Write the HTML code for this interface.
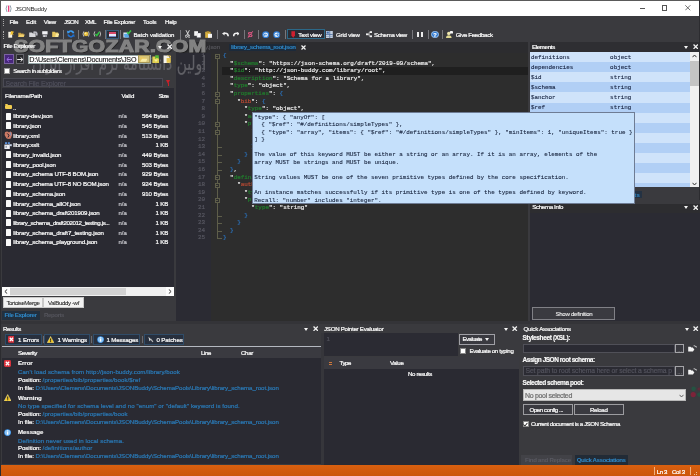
<!DOCTYPE html>
<html><head><meta charset="utf-8"><title>JSONBuddy</title>
<style>
*{box-sizing:border-box;margin:0;padding:0}
html,body{width:700px;height:476px;overflow:hidden}
body{position:relative;background:#3a3a3e;font:6px "Liberation Sans",sans-serif;color:#fafafa;line-height:1;-webkit-text-stroke:0.22px}
.a{position:absolute;white-space:nowrap}
.t{transform:translateY(-50%)}
.b{font-weight:bold;-webkit-text-stroke:0.08px}
.m{font-family:"Liberation Mono",monospace;font-size:5.9px}
.blue{color:#2f86c4}
.dim{color:#64646c}
.k{color:#217c2d}.s{color:#e8e8e8}.p{color:#d8d8d8}.br{color:#2b70b8}.r{color:#b84a34}
.sep{position:absolute;width:1px;height:9px;top:30px;background:#77777c}
.tt{color:#14203a;-webkit-text-stroke:0.08px}
.el{color:#14203e;-webkit-text-stroke:0.1px}
</style></head><body><div id="root" style="position:absolute;left:0;top:0;width:700px;height:476px;overflow:hidden;will-change:transform">
<div class="a" style="left:0px;top:0px;width:700px;height:16px;background:#fff;border-top:1px solid #5a5a5a;border-left:1px solid #555"></div>
<svg class="a" style="left:5.4px;top:5px" width="7.2" height="7.4" viewBox="0 0 7.2 7.4"><path d="M2 0.4Q0.2 3.7 2 7M5.2 0.4Q7 3.7 5.2 7" stroke="#8a9aa8" stroke-width="0.9" fill="none"/><rect x="3" y="0.6" width="1.3" height="6.2" fill="#e8407c"/></svg>
<div class="a t " style="left:15px;top:8.7px;font-size:6.2px;letter-spacing:-0.257px;color:#2a2a2a;-webkit-text-stroke:0">JSONBuddy</div>
<div class="a" style="left:640px;top:8px;width:4.8px;height:0.8px;background:#555;"></div>
<div class="a" style="left:662px;top:5.4px;width:5.4px;height:5.4px;background:transparent;border:0.8px solid #555"></div>
<svg class="a" style="left:685.4px;top:5.2px" width="5.6" height="5.6" viewBox="0 0 5.6 5.6"><path d="M0.3 0.3L5.3 5.3M5.3 0.3L0.3 5.3" stroke="#444" stroke-width="0.75"/></svg>
<div class="a" style="left:698.7px;top:0px;width:1.3px;height:200px;background:#2c2c30;z-index:12"></div>
<div class="a" style="left:0px;top:16px;width:1.2px;height:460px;background:#2c2c30;z-index:12"></div>
<div class="a" style="left:3.1px;top:19.2px;width:1px;height:1px;background:#aaa;"></div>
<div class="a" style="left:3.1px;top:21.0px;width:1px;height:1px;background:#aaa;"></div>
<div class="a" style="left:3.1px;top:22.8px;width:1px;height:1px;background:#aaa;"></div>
<div class="a" style="left:3.1px;top:24.6px;width:1px;height:1px;background:#aaa;"></div>
<div class="a t " style="left:9.4px;top:22.1px;font-size:6.1px;letter-spacing:-0.307px;">File</div>
<div class="a t " style="left:26px;top:22.1px;font-size:6.1px;letter-spacing:-0.128px;">Edit</div>
<div class="a t " style="left:43.7px;top:22.1px;font-size:6.1px;letter-spacing:-0.203px;">View</div>
<div class="a t " style="left:64px;top:22.1px;font-size:6.1px;letter-spacing:-0.567px;">JSON</div>
<div class="a t " style="left:85px;top:22.1px;font-size:6.1px;letter-spacing:-0.514px;">XML</div>
<div class="a t " style="left:103.5px;top:22.1px;font-size:6.1px;letter-spacing:-0.210px;">File Explorer</div>
<div class="a t " style="left:143px;top:22.1px;font-size:6.1px;letter-spacing:-0.148px;">Tools</div>
<div class="a t " style="left:165px;top:22.1px;font-size:6.1px;letter-spacing:-0.261px;">Help</div>
<div class="a" style="left:3.1px;top:30.6px;width:1px;height:1px;background:#aaa;"></div>
<div class="a" style="left:3.1px;top:32.4px;width:1px;height:1px;background:#aaa;"></div>
<div class="a" style="left:3.1px;top:34.2px;width:1px;height:1px;background:#aaa;"></div>
<div class="a" style="left:3.1px;top:36.0px;width:1px;height:1px;background:#aaa;"></div>
<div class="a" style="left:3.1px;top:37.800000000000004px;width:1px;height:1px;background:#aaa;"></div>
<svg class="a" style="left:8.2px;top:30.6px" width="6.4" height="7" viewBox="0 0 6.4 7"><path d="M0.3 0.8H4.2V6.7H0.3Z" fill="#f4f0e4"/><path d="M3 0L6.2 0.8L4.8 2.2L5.6 4L3.6 3.2L2.4 4.4L2.6 2.4Z" fill="#f0c030"/></svg>
<svg class="a" style="left:18.4px;top:32px" width="7" height="5.4" viewBox="0 0 7 5.4"><path d="M0.2 0.8H2.6L3.2 1.6H5.6V5.2H0.2Z" fill="#c8a040"/><path d="M1.4 2.6H6.8L5.6 5.2H0.2Z" fill="#f0d070"/></svg>
<svg class="a" style="left:29.4px;top:30.8px" width="8.8" height="6.6" viewBox="0 0 8.8 6.6"><path d="M0.2 1.4H3L3.6 2.2H6.6V6.4H0.2Z" fill="#d8d8dc"/><path d="M4.6 0.2L7.4 0.6L8.6 2V4.4H6.8V2H4.2Z" fill="#b8b8c0"/></svg>
<svg class="a" style="left:42.2px;top:30.8px" width="5.8" height="6.6" viewBox="0 0 5.8 6.6"><rect x="0.2" y="0.2" width="5.4" height="3.2" fill="#f0f0f4"/><rect x="0.8" y="3.8" width="4.2" height="2.6" fill="#a0a0a8"/><rect x="1.6" y="4.4" width="1.2" height="1.6" fill="#e0e0e0"/></svg>
<svg class="a" style="left:51.8px;top:31.2px" width="7.4" height="6.2" viewBox="0 0 7.4 6.2"><path d="M0.2 0.8H2.8L3.4 1.6H6.2V6H0.2Z" fill="#e8c860"/><path d="M4 2.6L7.2 2.6L6.2 6H3.2Z" fill="#f8e8a0"/></svg>
<div class="sep" style="left:63.3px"></div>
<svg class="a" style="left:67.2px;top:30.4px" width="7.6" height="7.8" viewBox="0 0 7.6 7.8"><path d="M6.6 3.2A3 3 0 0 0 1.2 2.4" stroke="#3a9af0" stroke-width="1.7" fill="none"/><path d="M0 0.6L0.4 3.6L3 2.8Z" fill="#3a9af0"/><path d="M1 4.6A3 3 0 0 0 6.4 5.4" stroke="#2070d0" stroke-width="1.7" fill="none"/><path d="M7.6 7.2L7.2 4.2L4.6 5Z" fill="#2070d0"/></svg>
<div class="sep" style="left:78.2px"></div>
<svg class="a" style="left:81.6px;top:31.4px" width="8.2" height="6" viewBox="0 0 8.2 6"><path d="M1.8 0.4Q0.2 3 1.8 5.6M6.4 0.4Q8 3 6.4 5.6" stroke="#c8c8c8" stroke-width="0.9" fill="none"/><circle cx="4.1" cy="3" r="2.3" fill="#e8c040"/><circle cx="3.6" cy="2.4" r="0.9" fill="#fff0a0"/></svg>
<svg class="a" style="left:93.2px;top:31.4px" width="8.6" height="6" viewBox="0 0 8.6 6"><path d="M1.8 0.4Q0.2 3 1.8 5.6M6.8 0.4Q8.4 3 6.8 5.6" stroke="#c8c8c8" stroke-width="0.9" fill="none"/><path d="M2.4 3L3.8 4.6L6.4 1" stroke="#30c040" stroke-width="1.5" fill="none"/></svg>
<div class="sep" style="left:104.6px"></div>
<div class="a" style="left:106.2px;top:29.6px;width:12.8px;height:9.6px;background:#2b2d36;border:1px solid #385a78"></div>
<div class="a" style="left:109px;top:32px;width:7px;height:2.4px;background:#d84868;"></div>
<div class="a" style="left:109px;top:34.4px;width:7px;height:2.6px;background:#e4e8f8;"></div>
<div class="a" style="left:109px;top:36.2px;width:7px;height:0.8px;background:#7088c8;"></div>
<div class="sep" style="left:120.3px"></div>
<svg class="a" style="left:123.2px;top:30px" width="8.4" height="8" viewBox="0 0 8.4 8"><path d="M0.4 2.6L4.4 2.6L5.6 7.6H0.4Z" fill="#dce8f4"/><path d="M1 4L5 3.4L6.4 7.6H1.6Z" fill="#58a8e8"/><path d="M4 2L5.4 3.6L8 0.4" stroke="#38c048" stroke-width="1.5" fill="none"/></svg>
<div class="a t " style="left:133.4px;top:34.5px;font-size:6.1px;letter-spacing:-0.129px;">Batch validation</div>
<div class="sep" style="left:180.1px;height:10px"></div>
<svg class="a" style="left:184.8px;top:30.4px" width="5.4" height="8" viewBox="0 0 5.4 8"><path d="M1 0.2L3.6 5.2M4.4 0.2L1.8 5.2" stroke="#e4e4e4" stroke-width="0.9" fill="none"/><circle cx="1.3" cy="6.3" r="1.1" fill="none" stroke="#e4e4e4" stroke-width="0.8"/><circle cx="4.1" cy="6.3" r="1.1" fill="none" stroke="#e4e4e4" stroke-width="0.8"/></svg>
<svg class="a" style="left:194.4px;top:30.8px" width="7" height="6.8" viewBox="0 0 7 6.8"><rect x="0.2" y="0.2" width="3.8" height="4.6" fill="#f4f4f4"/><rect x="2.8" y="2" width="4" height="4.6" fill="#d4d4dc"/><rect x="3.4" y="2.6" width="2.8" height="3.4" fill="#f8f8f8"/></svg>
<svg class="a" style="left:205px;top:30.6px" width="7.4" height="7" viewBox="0 0 7.4 7"><rect x="0.2" y="0.8" width="5.4" height="6" fill="#d8b040"/><rect x="1.6" y="0" width="2.6" height="1.6" fill="#a08030"/><rect x="3" y="2.8" width="4.2" height="4" fill="#f4f4f4"/></svg>
<div class="sep" style="left:217.3px"></div>
<svg class="a" style="left:221.8px;top:32.4px" width="6.8" height="4.4" viewBox="0 0 6.8 4.4"><path d="M6.2 4.2Q6.2 1.2 3.4 1.2H1.8" stroke="#f0f0f0" stroke-width="1.6" fill="none"/><path d="M0 1.6L2.6 0V3.4Z" fill="#f0f0f0"/></svg>
<svg class="a" style="left:232.6px;top:32.4px" width="6.8" height="4.4" viewBox="0 0 6.8 4.4"><path d="M0.6 4.2Q0.6 1.2 3.4 1.2H5" stroke="#f0f0f0" stroke-width="1.6" fill="none"/><path d="M6.8 1.6L4.2 0V3.4Z" fill="#f0f0f0"/></svg>
<div class="sep" style="left:243.7px"></div>
<div class="a t b" style="left:247.6px;top:34.6px;font-size:8px;color:#e05884;-webkit-text-stroke:0">S</div>
<svg class="a" style="left:247.2px;top:30.8px" width="6.8" height="7" viewBox="0 0 6.8 7"><path d="M5.8 0.2L1 6.8" stroke="#e05884" stroke-width="0.9"/></svg>
<div class="sep" style="left:258px"></div>
<svg class="a" style="left:262.3px;top:30.6px" width="7.4" height="7.4" viewBox="0 0 7.4 7.4"><circle cx="3.7" cy="3.7" r="3.5" fill="#2f7ed8"/><circle cx="3.7" cy="3.7" r="2.3" fill="#e8f2fc"/><path d="M5 3.7H2.2M3.4 2.4L2 3.7L3.4 5" stroke="#2f7ed8" stroke-width="0.8" fill="none"/></svg>
<svg class="a" style="left:273.3px;top:30.6px" width="7.4" height="7.4" viewBox="0 0 7.4 7.4"><circle cx="3.7" cy="3.7" r="3.5" fill="#2f7ed8"/><circle cx="3.7" cy="3.7" r="2.3" fill="#e8f2fc"/><path d="M2.4 3.7H5.2M4 2.4L5.4 3.7L4 5" stroke="#2f7ed8" stroke-width="0.8" fill="none"/></svg>
<div class="sep" style="left:284.5px"></div>
<div class="a" style="left:287px;top:28.6px;width:38.4px;height:10.6px;background:#2a2c34;border:1px solid #2c6888"></div>
<svg class="a" style="left:291px;top:31px" width="4.4" height="7" viewBox="0 0 4.4 7"><path d="M0.4 0.2H4V4.4L2.2 6.8L0.4 4.4Z" fill="#d02030"/></svg>
<div class="a t " style="left:298.3px;top:34.5px;font-size:6.1px;letter-spacing:-0.209px;">Text view</div>
<svg class="a" style="left:326.4px;top:30.6px" width="6.8" height="7.6" viewBox="0 0 6.8 7.6"><rect width="6.8" height="7.6" fill="#c4d0e0"/><rect x="0.6" y="0.6" width="2.2" height="2" fill="#3c68a8"/><rect x="3.4" y="0" width="0.8" height="7.6" fill="#5070a0"/><rect x="0" y="3.2" width="6.8" height="0.8" fill="#5070a0"/><rect x="0" y="5.4" width="6.8" height="0.6" fill="#8098b8"/></svg>
<div class="a t " style="left:336px;top:34.5px;font-size:6.1px;letter-spacing:-0.180px;">Grid view</div>
<svg class="a" style="left:365.6px;top:31.2px" width="6.6" height="6.4" viewBox="0 0 6.6 6.4"><rect x="0" y="2.4" width="2.6" height="1.8" fill="#f0f0f0"/><rect x="3.8" y="0.2" width="2.6" height="1.8" fill="#f0f0f0"/><rect x="3.8" y="4.4" width="2.6" height="1.8" fill="#f0f0f0"/><path d="M2.6 3.3H3.2M3.2 1.1V5.3M3.2 1.1H3.8M3.2 5.3H3.8" stroke="#f0f0f0" stroke-width="0.6" fill="none"/></svg>
<div class="a t " style="left:374px;top:34.5px;font-size:6.1px;letter-spacing:-0.307px;">Schema view</div>
<div class="sep" style="left:412px"></div>
<div class="a" style="left:416.6px;top:31.6px;width:2.4px;height:5.8px;background:#ececec;"></div>
<div class="a" style="left:421px;top:31.6px;width:2.4px;height:5.8px;background:#ececec;"></div>
<div class="sep" style="left:427.5px"></div>
<div class="a" style="left:431.4px;top:30.9px;width:7.2px;height:7.2px;border-radius:4px;background:#2f78d0;border:0.6px solid #9cc4f0;color:#fff;font-size:5.6px;font-weight:bold;text-align:center;line-height:6.2px">?</div>
<div class="sep" style="left:441.5px"></div>
<svg class="a" style="left:446.4px;top:30.6px" width="7" height="7.2" viewBox="0 0 7 7.2"><circle cx="2.8" cy="2.4" r="1.7" fill="#f0e8b0"/><path d="M0 7.2Q0 4.2 2.8 4.2Q5.6 4.2 5.6 7.2Z" fill="#e0d890"/><rect x="4" y="0" width="3" height="2.4" rx="0.5" fill="#f8f8f8"/></svg>
<div class="a t " style="left:455.7px;top:34.5px;font-size:6.1px;letter-spacing:-0.309px;">Give Feedback</div>
<div class="a" style="left:0px;top:42px;width:176px;height:280px;background:#3a3a3e;"></div>
<div class="a t  b" style="left:3.4px;top:46.1px;font-size:6.1px;letter-spacing:-0.412px;z-index:10">File Explorer</div>
<div class="a" style="z-index:10;left:158.0px;top:45.6px;width:0;height:0;border-left:2.5px solid transparent;border-right:2.5px solid transparent;border-top:3px solid #f4f4f4"></div>
<svg class="a" style="z-index:10;left:166.7px;top:44.0px" width="5.4" height="5.4" viewBox="0 0 10 10"><path d="M1 1L9 9M9 1L1 9" stroke="#f4f4f4" stroke-width="2.4"/></svg>
<div class="a" style="left:0;top:0;z-index:2">
<div class="a" style="left:4px;top:54.4px;width:9.8px;height:9.4px;background:#47267c;border:0.8px solid #7a62a0"></div>
<svg class="a" style="left:5.6px;top:56.6px" width="6.6" height="5" viewBox="0 0 6.6 5"><path d="M6.4 2.5H1M3 0.4L0.8 2.5L3 4.6" stroke="#9a6ae0" stroke-width="1" fill="none"/></svg>
<div class="a" style="left:15.9px;top:54.4px;width:8.6px;height:9.4px;background:#28282c;border:0.8px solid #66666c"></div>
<svg class="a" style="left:17px;top:56.6px" width="6.6" height="5" viewBox="0 0 6.6 5"><path d="M0.2 2.5H5.6M3.6 0.4L5.8 2.5L3.6 4.6" stroke="#f0f0f0" stroke-width="1" fill="none"/></svg>
<div class="a" style="left:28px;top:54.6px;width:122.5px;height:9.4px;background:#fff;border:0.8px solid #9aa"></div>
<div class="a t " style="left:29.3px;top:59.6px;font-size:7.2px;letter-spacing:-0.188px;color:#111;-webkit-text-stroke:0.1px">D:\Users\Clemens\Documents\JSO</div>
<div class="a" style="left:137.5px;top:55.4px;width:12px;height:7.8px;background:#d4c47c;border:0.8px solid #a89858"></div>
<svg class="a" style="left:140px;top:56.2px" width="7.4" height="6" viewBox="0 0 7.4 6"><path d="M0.2 0.8H2.8L3.4 1.6H6.2V5.8H0.2Z" fill="#e8c860"/><path d="M2 2.8L7.2 2.8L6.2 5.8H0.2Z" fill="#f8eca8"/></svg>
<svg class="a" style="left:152.4px;top:55.2px" width="8" height="8.2" viewBox="0 0 8 8.2"><path d="M0.4 1.6H3.2L4 2.6H7V8H0.4Z" fill="#e0d050"/><path d="M3.2 0.2H6.8V4L5 2.8L3.2 4Z" fill="#58b838"/><path d="M2 4.4L6 4.4L4 7Z" fill="#f4f0a0"/></svg>
<svg class="a" style="left:163.2px;top:55.2px" width="8" height="8.2" viewBox="0 0 8 8.2"><path d="M0.6 0.4H5L6.6 2V8H0.6Z" fill="#f4f4ec"/><path d="M3.6 3H7.8V7.8H3.6Z" fill="#e8c850"/><path d="M4.2 1L7.6 1L7.6 2.8" fill="none" stroke="#f0d060" stroke-width="0.9"/></svg>
<div class="a" style="left:4px;top:68px;width:6.2px;height:6px;background:#fff;border:0.5px solid #999"></div>
<div class="a t " style="left:13.2px;top:71.3px;font-size:6.2px;letter-spacing:-0.411px;">Search in subfolders</div>
</div>
<div class="a" style="left:3px;top:78.2px;width:159.5px;height:9px;background:#32323b;border:0.8px solid #4a4a54"></div>
<div class="a t " style="left:5.6px;top:83px;font-size:7px;letter-spacing:-0.166px;color:#4e4e5a">Search File Explorer</div>
<div class="a" style="left:165.5px;top:80px;width:0;height:0;border-left:2.7px solid transparent;border-right:2.7px solid transparent;border-top:4px solid #c8202a"></div>
<div class="a" style="left:167.5px;top:83px;width:1.4px;height:3.2px;background:#c8202a;"></div>
<div class="a" style="left:2px;top:87.8px;width:171.5px;height:199.5px;background:#2a2a32;"></div>
<div class="a t " style="left:5px;top:95.7px;font-size:6.1px;letter-spacing:-0.179px;">Filename/Path</div>
<div class="a t " style="left:121.4px;top:95.7px;font-size:6.1px;letter-spacing:-0.042px;">Valid</div>
<div class="a t " style="left:158.6px;top:95.7px;font-size:6.1px;letter-spacing:-0.542px;">Size</div>
<div class="a" style="left:4.6px;top:104.7px;width:7.2px;height:4.6px;background:#f0cc50;border-radius:1px"></div>
<div class="a" style="left:4.6px;top:103.7px;width:3.2px;height:1.6px;background:#f0cc50;border-radius:1px 1px 0 0"></div>
<div class="a t " style="left:13px;top:107.5px;font-size:6.12px;letter-spacing:-0.067px;">..</div>
<div class="a" style="left:5.6px;top:112.60000000000001px;width:5.2px;height:7px;background:#fafafa;border-radius:0.5px"></div>
<div class="a t " style="left:13.3px;top:116.2px;font-size:6.12px;letter-spacing:-0.113px;">library-dev.json</div>
<div class="a t" style="left:118.5px;top:116.2px;color:#c4c4ca">n/a</div>
<div class="a t " style="left:142.05145625px;top:116.2px;font-size:6.12px;letter-spacing:-0.119px;">564 Bytes</div>
<div class="a" style="left:5.6px;top:122.30000000000001px;width:5.2px;height:7px;background:#fafafa;border-radius:0.5px"></div>
<div class="a t " style="left:13.3px;top:125.9px;font-size:6.12px;letter-spacing:-0.107px;">library.json</div>
<div class="a t" style="left:118.5px;top:125.9px;color:#c4c4ca">n/a</div>
<div class="a t " style="left:142.05145625px;top:125.9px;font-size:6.12px;letter-spacing:-0.119px;">545 Bytes</div>
<svg class="a" style="left:3.8px;top:131.4px" width="9" height="8.4" viewBox="0 0 9 8.4"><path d="M1 1.2Q3.4 -0.4 5 1.6L6.2 0.6Q8.4 1 8.2 3.6L6.8 7.6Q4.4 8.6 2.4 7.2L0.6 4Z" fill="#cc7a64"/><path d="M3.2 2.4L5 4.2L4 6.4" stroke="#2a2030" stroke-width="1" fill="none"/><path d="M6.2 1.4L7 4.6" stroke="#8890b0" stroke-width="1.1"/></svg>
<div class="a t " style="left:13.3px;top:135.6px;font-size:6.12px;letter-spacing:-0.110px;">library.xml</div>
<div class="a t" style="left:118.5px;top:135.6px;color:#c4c4ca">n/a</div>
<div class="a t " style="left:142.05145625px;top:135.6px;font-size:6.12px;letter-spacing:-0.119px;">513 Bytes</div>
<svg class="a" style="left:4px;top:141.70000000000002px" width="8" height="7.2" viewBox="0 0 8 7.2"><rect x="0.4" y="2.6" width="5.4" height="4.4" fill="#f0f0f4"/><rect x="1" y="0.2" width="2" height="1.8" fill="#5a90d8"/><rect x="3.8" y="0.2" width="2" height="1.8" fill="#5a90d8"/><rect x="5.4" y="2.2" width="2.4" height="2" fill="#c8d4e8"/><rect x="1.4" y="3.8" width="1.6" height="2" fill="#9aa4b4"/></svg>
<div class="a t " style="left:13.3px;top:145.3px;font-size:6.12px;letter-spacing:-0.100px;">library.xslt</div>
<div class="a t" style="left:118.5px;top:145.3px;color:#c4c4ca">n/a</div>
<div class="a t " style="left:155.45234374999998px;top:145.3px;font-size:6.12px;letter-spacing:-0.130px;">1 KB</div>
<div class="a" style="left:5.6px;top:151.4px;width:5.2px;height:7px;background:#fafafa;border-radius:0.5px"></div>
<div class="a t " style="left:13.3px;top:155.0px;font-size:6.12px;letter-spacing:-0.111px;">library_invalid.json</div>
<div class="a t" style="left:118.5px;top:155.0px;color:#c4c4ca">n/a</div>
<div class="a t " style="left:142.05145625px;top:155.0px;font-size:6.12px;letter-spacing:-0.119px;">449 Bytes</div>
<div class="a" style="left:5.6px;top:161.1px;width:5.2px;height:7px;background:#fafafa;border-radius:0.5px"></div>
<div class="a t " style="left:13.3px;top:164.7px;font-size:6.12px;letter-spacing:-0.116px;">library_pool.json</div>
<div class="a t" style="left:118.5px;top:164.7px;color:#c4c4ca">n/a</div>
<div class="a t " style="left:142.05145625px;top:164.7px;font-size:6.12px;letter-spacing:-0.119px;">503 Bytes</div>
<div class="a" style="left:5.6px;top:170.79999999999998px;width:5.2px;height:7px;background:#fafafa;border-radius:0.5px"></div>
<div class="a t " style="left:13.3px;top:174.39999999999998px;font-size:6.12px;letter-spacing:-0.136px;">library_schema UTF-8 BOM.json</div>
<div class="a t" style="left:118.5px;top:174.39999999999998px;color:#c4c4ca">n/a</div>
<div class="a t " style="left:142.05145625px;top:174.39999999999998px;font-size:6.12px;letter-spacing:-0.119px;">929 Bytes</div>
<div class="a" style="left:5.6px;top:180.5px;width:5.2px;height:7px;background:#fafafa;border-radius:0.5px"></div>
<div class="a t " style="left:13.3px;top:184.1px;font-size:6.12px;letter-spacing:-0.138px;">library_schema UTF-8 NO BOM.json</div>
<div class="a t" style="left:118.5px;top:184.1px;color:#c4c4ca">n/a</div>
<div class="a t " style="left:142.05145625px;top:184.1px;font-size:6.12px;letter-spacing:-0.119px;">924 Bytes</div>
<div class="a" style="left:5.6px;top:190.20000000000002px;width:5.2px;height:7px;background:#fafafa;border-radius:0.5px"></div>
<div class="a t " style="left:13.3px;top:193.8px;font-size:6.12px;letter-spacing:-0.126px;">library_schema.json</div>
<div class="a t" style="left:118.5px;top:193.8px;color:#c4c4ca">n/a</div>
<div class="a t " style="left:142.05145625px;top:193.8px;font-size:6.12px;letter-spacing:-0.119px;">910 Bytes</div>
<div class="a" style="left:5.6px;top:199.9px;width:5.2px;height:7px;background:#fafafa;border-radius:0.5px"></div>
<div class="a t " style="left:13.3px;top:203.5px;font-size:6.12px;letter-spacing:-0.124px;">library_schema_allOf.json</div>
<div class="a t" style="left:118.5px;top:203.5px;color:#c4c4ca">n/a</div>
<div class="a t " style="left:155.45234374999998px;top:203.5px;font-size:6.12px;letter-spacing:-0.130px;">1 KB</div>
<div class="a" style="left:5.6px;top:209.6px;width:5.2px;height:7px;background:#fafafa;border-radius:0.5px"></div>
<div class="a t " style="left:13.3px;top:213.2px;font-size:6.12px;letter-spacing:-0.129px;">library_schema_draft201909.json</div>
<div class="a t" style="left:118.5px;top:213.2px;color:#c4c4ca">n/a</div>
<div class="a t " style="left:155.45234374999998px;top:213.2px;font-size:6.12px;letter-spacing:-0.130px;">1 KB</div>
<div class="a" style="left:5.6px;top:219.29999999999998px;width:5.2px;height:7px;background:#fafafa;border-radius:0.5px"></div>
<div class="a t " style="left:13.3px;top:222.89999999999998px;font-size:6.1px;letter-spacing:-0.341px;">library_schema_draft202012_testing.js...</div>
<div class="a t" style="left:118.5px;top:222.89999999999998px;color:#c4c4ca">n/a</div>
<div class="a t " style="left:155.45234374999998px;top:222.89999999999998px;font-size:6.12px;letter-spacing:-0.130px;">1 KB</div>
<div class="a" style="left:5.6px;top:229.0px;width:5.2px;height:7px;background:#fafafa;border-radius:0.5px"></div>
<div class="a t " style="left:13.3px;top:232.6px;font-size:6.12px;letter-spacing:-0.123px;">library_schema_draft7_testing.json</div>
<div class="a t" style="left:118.5px;top:232.6px;color:#c4c4ca">n/a</div>
<div class="a t " style="left:155.45234374999998px;top:232.6px;font-size:6.12px;letter-spacing:-0.130px;">1 KB</div>
<div class="a" style="left:5.6px;top:238.7px;width:5.2px;height:7px;background:#fafafa;border-radius:0.5px"></div>
<div class="a t " style="left:13.3px;top:242.29999999999998px;font-size:6.12px;letter-spacing:-0.130px;">library_schema_playground.json</div>
<div class="a t" style="left:118.5px;top:242.29999999999998px;color:#c4c4ca">n/a</div>
<div class="a t " style="left:155.45234374999998px;top:242.29999999999998px;font-size:6.12px;letter-spacing:-0.130px;">1 KB</div>
<div class="a" style="left:2px;top:287.3px;width:171.5px;height:8.6px;background:#f0f0f0;"></div>
<div class="a" style="left:2px;top:287.3px;width:8px;height:8.6px;background:#fdfdfd;"></div>
<div class="a" style="left:165.5px;top:287.3px;width:8px;height:8.6px;background:#fdfdfd;"></div>
<div class="a" style="left:10px;top:288px;width:115.5px;height:7.2px;background:#d2d2d2;"></div>
<svg class="a" style="left:4px;top:289.2px" width="4" height="5" viewBox="0 0 4 5"><path d="M3.2 0.4L0.9 2.5L3.2 4.6" stroke="#333" fill="none" stroke-width="1"/></svg>
<svg class="a" style="left:167.5px;top:289.2px" width="4" height="5" viewBox="0 0 4 5"><path d="M0.8 0.4L3.1 2.5L0.8 4.6" stroke="#333" fill="none" stroke-width="1"/></svg>
<div class="a" style="left:3px;top:296.8px;width:39.5px;height:11.2px;background:#f2f2f2;border:0.8px solid #c8c8c8"></div>
<div class="a" style="left:42.5px;top:296.8px;width:41.5px;height:11.2px;background:#f2f2f2;border:0.8px solid #c8c8c8"></div>
<div class="a t " style="left:6.5px;top:302.6px;font-size:6.1px;letter-spacing:-0.434px;color:#222;-webkit-text-stroke:0.05px">TortoiseMerge</div>
<div class="a t " style="left:48px;top:302.6px;font-size:6.1px;letter-spacing:-0.374px;color:#222;-webkit-text-stroke:0.05px">ValBuddy -wf</div>
<div class="a" style="left:2px;top:311.2px;width:38px;height:8.6px;background:#22303f;"></div>
<div class="a" style="left:0px;top:321.4px;width:700px;height:3px;background:#343438;"></div>
<div class="a t  b" style="left:4.5px;top:315.3px;font-size:6.1px;letter-spacing:-0.381px;color:#2f86c4">File Explorer</div>
<div class="a t  b" style="left:44px;top:315.3px;font-size:6.1px;letter-spacing:-0.435px;color:#55555c">Reports</div>
<div class="a" style="left:176px;top:42px;width:352px;height:10.5px;background:#2c2c2f;"></div>
<div class="a t " style="left:192px;top:47.2px;font-size:6.12px;letter-spacing:-0.095px;color:#54545a">library.json</div>
<div class="a" style="left:229.4px;top:43.6px;width:67px;height:7px;background:#1c2a3a;"></div>
<div class="a t  b" style="left:231px;top:47.2px;font-size:6.1px;letter-spacing:-0.398px;color:#2f86c4">library_schema_root.json</div>
<svg class="a" style="left:301px;top:44.7px" width="5" height="5" viewBox="0 0 10 10"><path d="M1 1L9 9M9 1L1 9" stroke="#f4f4f4" stroke-width="2.4"/></svg>
<div class="a" style="left:176px;top:52.5px;width:352px;height:268.5px;background:#2d2d2d;"></div>
<div class="a" style="left:176px;top:52.5px;width:34.6px;height:268.5px;background:#2b2b33;"></div>
<div class="a" style="left:222px;top:67.4px;width:306px;height:7.6px;background:#1f1f1f;"></div>
<div class="a" style="left:216.8px;top:56.0px;width:0.8px;height:182.39999999999998px;background:#5e5e4a;"></div>
<div class="a t m" style="left:189px;width:16px;text-align:right;top:56.00px;color:#565660">1</div>
<div class="a t m" style="left:223px;top:56.00px;white-space:pre"><span class="br">{</span></div>
<div class="a" style="left:214.7px;top:53.6px;width:5px;height:5px;background:#2d2d2d;border:0.8px solid #5e5e4a"></div>
<div class="a" style="left:215.9px;top:55.7px;width:2.6px;height:0.7px;background:#5e5e4a;"></div>
<div class="a t m" style="left:189px;width:16px;text-align:right;top:63.60px;color:#565660">2</div>
<div class="a t m" style="left:223px;top:63.60px;white-space:pre">  <span class="s">&quot;</span><span class="k">$schema</span><span class="s">&quot;</span><span class="p">: </span><span class="s">&quot;https://json-schema.org/draft/2019-09/schema&quot;</span><span class="p">,</span></div>
<div class="a t m" style="left:189px;width:16px;text-align:right;top:71.20px;color:#565660">3</div>
<div class="a t m" style="left:223px;top:71.20px;white-space:pre">  <span class="s">&quot;</span><span class="k">$id</span><span class="s">&quot;</span><span class="p">: </span><span class="s">&quot;http://json-buddy.com/library/root&quot;</span><span class="p">,</span></div>
<div class="a t m" style="left:189px;width:16px;text-align:right;top:78.80px;color:#565660">4</div>
<div class="a t m" style="left:223px;top:78.80px;white-space:pre">  <span class="s">&quot;</span><span class="k">description</span><span class="s">&quot;</span><span class="p">: </span><span class="s">&quot;Schema for a library&quot;</span><span class="p">,</span></div>
<div class="a t m" style="left:189px;width:16px;text-align:right;top:86.40px;color:#565660">5</div>
<div class="a t m" style="left:223px;top:86.40px;white-space:pre">  <span class="s">&quot;</span><span class="k">type</span><span class="s">&quot;</span><span class="p">: </span><span class="s">&quot;object&quot;</span><span class="p">,</span></div>
<div class="a t m" style="left:189px;width:16px;text-align:right;top:94.00px;color:#565660">6</div>
<div class="a t m" style="left:223px;top:94.00px;white-space:pre">  <span class="s">&quot;</span><span class="k">properties</span><span class="s">&quot;</span><span class="p">: </span><span class="br">{</span><span class="p"></span></div>
<div class="a" style="left:214.7px;top:91.6px;width:5px;height:5px;background:#2d2d2d;border:0.8px solid #5e5e4a"></div>
<div class="a" style="left:215.9px;top:93.7px;width:2.6px;height:0.7px;background:#5e5e4a;"></div>
<div class="a t m" style="left:189px;width:16px;text-align:right;top:101.60px;color:#565660">7</div>
<div class="a t m" style="left:223px;top:101.60px;white-space:pre">    <span class="s">&quot;</span><span class="r">bib</span><span class="s">&quot;</span><span class="p">: </span><span class="br">{</span><span class="p"></span></div>
<div class="a" style="left:214.7px;top:99.19999999999999px;width:5px;height:5px;background:#2d2d2d;border:0.8px solid #5e5e4a"></div>
<div class="a" style="left:215.9px;top:101.3px;width:2.6px;height:0.7px;background:#5e5e4a;"></div>
<div class="a t m" style="left:189px;width:16px;text-align:right;top:109.20px;color:#565660">8</div>
<div class="a t m" style="left:223px;top:109.20px;white-space:pre">      <span class="s">&quot;</span><span class="k">type</span><span class="s">&quot;</span><span class="p">: </span><span class="s">&quot;object&quot;</span><span class="p">,</span></div>
<div class="a t m" style="left:189px;width:16px;text-align:right;top:116.80px;color:#565660">9</div>
<div class="a t m" style="left:223px;top:116.80px;white-space:pre">      <span class="s">&quot;</span><span class="k">additionalProperties</span><span class="s">&quot;</span><span class="p">: </span><span class="br">false</span><span class="p">,</span></div>
<div class="a t m" style="left:189px;width:16px;text-align:right;top:124.40px;color:#565660">10</div>
<div class="a t m" style="left:223px;top:124.40px;white-space:pre">      <span class="s">&quot;</span><span class="k">properties</span><span class="s">&quot;</span><span class="p">: </span><span class="br">{</span><span class="p"></span></div>
<div class="a" style="left:214.7px;top:121.99999999999999px;width:5px;height:5px;background:#2d2d2d;border:0.8px solid #5e5e4a"></div>
<div class="a" style="left:215.9px;top:124.1px;width:2.6px;height:0.7px;background:#5e5e4a;"></div>
<div class="a t m" style="left:189px;width:16px;text-align:right;top:132.00px;color:#565660">11</div>
<div class="a t m" style="left:223px;top:132.00px;white-space:pre">        <span class="s">&quot;</span><span class="r">book</span><span class="s">&quot;</span><span class="p">: </span><span class="br">{</span><span class="p"></span></div>
<div class="a" style="left:214.7px;top:129.6px;width:5px;height:5px;background:#2d2d2d;border:0.8px solid #5e5e4a"></div>
<div class="a" style="left:215.9px;top:131.7px;width:2.6px;height:0.7px;background:#5e5e4a;"></div>
<div class="a t m" style="left:189px;width:16px;text-align:right;top:139.60px;color:#565660">12</div>
<div class="a t m" style="left:223px;top:139.60px;white-space:pre">          <span class="s">&quot;</span><span class="k">$ref</span><span class="s">&quot;</span><span class="p">: </span><span class="s">&quot;http://json-buddy.com/library/book&quot;</span><span class="p"></span></div>
<div class="a t m" style="left:189px;width:16px;text-align:right;top:147.20px;color:#565660">13</div>
<div class="a t m" style="left:223px;top:147.20px;white-space:pre">        <span class="br">}</span></div>
<div class="a" style="left:217px;top:147.2px;width:4.6px;height:0.8px;background:#5e5e4a;"></div>
<div class="a t m" style="left:189px;width:16px;text-align:right;top:154.80px;color:#565660">14</div>
<div class="a t m" style="left:223px;top:154.80px;white-space:pre">      <span class="br">}</span></div>
<div class="a" style="left:217px;top:154.8px;width:4.6px;height:0.8px;background:#5e5e4a;"></div>
<div class="a t m" style="left:189px;width:16px;text-align:right;top:162.40px;color:#565660">15</div>
<div class="a t m" style="left:223px;top:162.40px;white-space:pre">    <span class="br">}</span></div>
<div class="a" style="left:217px;top:162.39999999999998px;width:4.6px;height:0.8px;background:#5e5e4a;"></div>
<div class="a t m" style="left:189px;width:16px;text-align:right;top:170.00px;color:#565660">16</div>
<div class="a t m" style="left:223px;top:170.00px;white-space:pre">  <span class="br">}</span><span class="p">,</span></div>
<div class="a" style="left:217px;top:170.0px;width:4.6px;height:0.8px;background:#5e5e4a;"></div>
<div class="a t m" style="left:189px;width:16px;text-align:right;top:177.60px;color:#565660">17</div>
<div class="a t m" style="left:223px;top:177.60px;white-space:pre">  <span class="s">&quot;</span><span class="k">definitions</span><span class="s">&quot;</span><span class="p">: </span><span class="br">{</span><span class="p"></span></div>
<div class="a" style="left:214.7px;top:175.2px;width:5px;height:5px;background:#2d2d2d;border:0.8px solid #5e5e4a"></div>
<div class="a" style="left:215.9px;top:177.29999999999998px;width:2.6px;height:0.7px;background:#5e5e4a;"></div>
<div class="a t m" style="left:189px;width:16px;text-align:right;top:185.20px;color:#565660">18</div>
<div class="a t m" style="left:223px;top:185.20px;white-space:pre">    <span class="s">&quot;</span><span class="r">author</span><span class="s">&quot;</span><span class="p">: </span><span class="br">{</span><span class="p"></span></div>
<div class="a" style="left:214.7px;top:182.79999999999998px;width:5px;height:5px;background:#2d2d2d;border:0.8px solid #5e5e4a"></div>
<div class="a" style="left:215.9px;top:184.89999999999998px;width:2.6px;height:0.7px;background:#5e5e4a;"></div>
<div class="a t m" style="left:189px;width:16px;text-align:right;top:192.80px;color:#565660">19</div>
<div class="a t m" style="left:223px;top:192.80px;white-space:pre">      <span class="s">&quot;</span><span class="k">type</span><span class="s">&quot;</span><span class="p">: </span><span class="s">&quot;object&quot;</span><span class="p">,</span></div>
<div class="a t m" style="left:189px;width:16px;text-align:right;top:200.40px;color:#565660">20</div>
<div class="a t m" style="left:223px;top:200.40px;white-space:pre">      <span class="s">&quot;</span><span class="k">properties</span><span class="s">&quot;</span><span class="p">: </span><span class="br">{</span><span class="p"></span></div>
<div class="a" style="left:214.7px;top:198.0px;width:5px;height:5px;background:#2d2d2d;border:0.8px solid #5e5e4a"></div>
<div class="a" style="left:215.9px;top:200.1px;width:2.6px;height:0.7px;background:#5e5e4a;"></div>
<div class="a t m" style="left:189px;width:16px;text-align:right;top:208.00px;color:#565660">21</div>
<div class="a t m" style="left:223px;top:208.00px;white-space:pre">        <span class="s">&quot;</span><span class="k">type</span><span class="s">&quot;</span><span class="p">: </span><span class="s">&quot;string&quot;</span><span class="p"></span></div>
<div class="a t m" style="left:189px;width:16px;text-align:right;top:215.60px;color:#565660">22</div>
<div class="a t m" style="left:223px;top:215.60px;white-space:pre">      <span class="br">}</span></div>
<div class="a" style="left:217px;top:215.6px;width:4.6px;height:0.8px;background:#5e5e4a;"></div>
<div class="a t m" style="left:189px;width:16px;text-align:right;top:223.20px;color:#565660">23</div>
<div class="a t m" style="left:223px;top:223.20px;white-space:pre">    <span class="br">}</span></div>
<div class="a" style="left:217px;top:223.2px;width:4.6px;height:0.8px;background:#5e5e4a;"></div>
<div class="a t m" style="left:189px;width:16px;text-align:right;top:230.80px;color:#565660">24</div>
<div class="a t m" style="left:223px;top:230.80px;white-space:pre">  <span class="br">}</span></div>
<div class="a" style="left:217px;top:230.79999999999998px;width:4.6px;height:0.8px;background:#5e5e4a;"></div>
<div class="a t m" style="left:189px;width:16px;text-align:right;top:238.40px;color:#565660">25</div>
<div class="a t m" style="left:223px;top:238.40px;white-space:pre"><span class="br">}</span></div>
<div class="a" style="left:217px;top:238.39999999999998px;width:4.6px;height:0.8px;background:#5e5e4a;"></div>
<div class="a" style="left:252px;top:112px;width:382.8px;height:91.5px;background:#c5e0fb;z-index:5;border:0.6px solid #6e7c94"></div>
<div class="a t m tt" style="z-index:6;left:254.3px;top:117.70px;white-space:pre">&quot;type&quot;: { &quot;anyOf&quot;: [</div>
<div class="a t m tt" style="z-index:6;left:254.3px;top:125.25px;white-space:pre">  { &quot;$ref&quot;: &quot;#/definitions/simpleTypes&quot; },</div>
<div class="a t m tt" style="z-index:6;left:254.3px;top:132.80px;white-space:pre">  { &quot;type&quot;: &quot;array&quot;, &quot;items&quot;: { &quot;$ref&quot;: &quot;#/definitions/simpleTypes&quot; }, &quot;minItems&quot;: 1, &quot;uniqueItems&quot;: true }</div>
<div class="a t m tt" style="z-index:6;left:254.3px;top:140.35px;white-space:pre">] }</div>
<div class="a t m tt" style="z-index:6;left:254.3px;top:155.45px;white-space:pre">The value of this keyword MUST be either a string or an array. If it is an array, elements of the</div>
<div class="a t m tt" style="z-index:6;left:254.3px;top:163.00px;white-space:pre">array MUST be strings and MUST be unique.</div>
<div class="a t m tt" style="z-index:6;left:254.3px;top:178.10px;white-space:pre">String values MUST be one of the seven primitive types defined by the core specification.</div>
<div class="a t m tt" style="z-index:6;left:254.3px;top:193.20px;white-space:pre">An instance matches successfully if its primitive type is one of the types defined by keyword.</div>
<div class="a t m tt" style="z-index:6;left:254.3px;top:200.75px;white-space:pre">Recall: &quot;number&quot; includes &quot;integer&quot;.</div>
<div class="a" style="left:530.3px;top:42.4px;width:169.7px;height:9.8px;background:#2e2e32;"></div>
<div class="a t  b" style="left:532px;top:46.7px;font-size:6.1px;letter-spacing:-0.515px;">Elements</div>
<div class="a" style="z-index:10;left:683.8px;top:45.7px;width:0;height:0;border-left:2.5px solid transparent;border-right:2.5px solid transparent;border-top:3px solid #f4f4f4"></div>
<svg class="a" style="z-index:10;left:692.5px;top:44.1px" width="5.4" height="5.4" viewBox="0 0 10 10"><path d="M1 1L9 9M9 1L1 9" stroke="#f4f4f4" stroke-width="2.4"/></svg>
<div class="a" style="left:530.3px;top:52.1px;width:168.4px;height:134.9px;overflow:hidden;background:#cfe3fa">
<div class="a" style="left:0;top:0.0px;width:160px;height:10.2px;background:#cfe3fa"></div>
<div class="a t m el" style="left:0.6px;top:5.5px">definitions</div>
<div class="a t m el" style="left:79.8px;top:5.5px">object</div>
<div class="a" style="left:0;top:10.1px;width:160px;height:10.2px;background:#b1cff5"></div>
<div class="a t m el" style="left:0.6px;top:15.6px">dependencies</div>
<div class="a t m el" style="left:79.8px;top:15.6px">object</div>
<div class="a" style="left:0;top:20.2px;width:160px;height:10.2px;background:#cfe3fa"></div>
<div class="a t m el" style="left:0.6px;top:25.7px">$id</div>
<div class="a t m el" style="left:79.8px;top:25.7px">string</div>
<div class="a" style="left:0;top:30.3px;width:160px;height:10.2px;background:#b1cff5"></div>
<div class="a t m el" style="left:0.6px;top:35.8px">$schema</div>
<div class="a t m el" style="left:79.8px;top:35.8px">string</div>
<div class="a" style="left:0;top:40.4px;width:160px;height:10.2px;background:#cfe3fa"></div>
<div class="a t m el" style="left:0.6px;top:45.9px">$anchor</div>
<div class="a t m el" style="left:79.8px;top:45.9px">string</div>
<div class="a" style="left:0;top:50.5px;width:160px;height:10.2px;background:#b1cff5"></div>
<div class="a t m el" style="left:0.6px;top:56.0px">$ref</div>
<div class="a t m el" style="left:79.8px;top:56.0px">string</div>
<div class="a" style="left:0;top:60.6px;width:160px;height:10.2px;background:#cfe3fa"></div>
<div class="a t m el" style="left:0.6px;top:66.1px">$recursiveRef</div>
<div class="a t m el" style="left:79.8px;top:66.1px">string</div>
<div class="a" style="left:0;top:70.7px;width:160px;height:10.2px;background:#b1cff5"></div>
<div class="a t m el" style="left:0.6px;top:76.2px">$recursiveAnchor</div>
<div class="a t m el" style="left:79.8px;top:76.2px">boolean</div>
<div class="a" style="left:0;top:80.8px;width:160px;height:10.2px;background:#cfe3fa"></div>
<div class="a t m el" style="left:0.6px;top:86.3px">$vocabulary</div>
<div class="a t m el" style="left:79.8px;top:86.3px">object</div>
<div class="a" style="left:0;top:90.9px;width:160px;height:10.2px;background:#b1cff5"></div>
<div class="a t m el" style="left:0.6px;top:96.4px">$comment</div>
<div class="a t m el" style="left:79.8px;top:96.4px">string</div>
<div class="a" style="left:0;top:101.0px;width:160px;height:10.2px;background:#cfe3fa"></div>
<div class="a t m el" style="left:0.6px;top:106.5px">$defs</div>
<div class="a t m el" style="left:79.8px;top:106.5px">object</div>
<div class="a" style="left:0;top:111.1px;width:160px;height:10.2px;background:#b1cff5"></div>
<div class="a t m el" style="left:0.6px;top:116.6px">additionalItems</div>
<div class="a t m el" style="left:79.8px;top:116.6px">object</div>
<div class="a" style="left:0;top:121.2px;width:160px;height:10.2px;background:#cfe3fa"></div>
<div class="a t m el" style="left:0.6px;top:126.7px">unevaluatedItems</div>
<div class="a t m el" style="left:79.8px;top:126.7px">object</div>
<div class="a" style="left:0;top:131.3px;width:160px;height:10.2px;background:#b1cff5"></div>
<div class="a t m el" style="left:0.6px;top:136.8px">items</div>
<div class="a t m el" style="left:79.8px;top:136.8px">object</div>
<div class="a" style="left:160.1px;top:0;width:8.3px;height:136px;background:#f0f0f0"></div>
<div class="a" style="left:160.1px;top:9.4px;width:8.3px;height:24.6px;background:#c4c4c4"></div>
<svg class="a" style="left:161.8px;top:2px" width="5" height="4" viewBox="0 0 5 4"><path d="M0.5 3.2L2.5 1L4.5 3.2" stroke="#333" fill="none" stroke-width="1"/></svg>
<svg class="a" style="left:161.8px;top:129.5px" width="5" height="4" viewBox="0 0 5 4"><path d="M0.5 0.8L2.5 3L4.5 0.8" stroke="#333" fill="none" stroke-width="1"/></svg>
</div>
<div class="a" style="left:530.3px;top:187px;width:169.7px;height:17px;background:#3a3a3e;"></div>
<div class="a" style="left:609px;top:191px;width:33px;height:7.4px;background:#243243;"></div>
<div class="a t  b" style="left:612px;top:194.6px;font-size:6.1px;letter-spacing:0.110px;color:#2f86c4">Elements</div>
<div class="a" style="left:530.3px;top:204px;width:169.7px;height:9.4px;background:#2d2d30;"></div>
<div class="a t " style="left:532.3px;top:207.2px;font-size:6.1px;letter-spacing:-0.322px;">Schema Info</div>
<div class="a" style="z-index:10;left:683.8px;top:206.2px;width:0;height:0;border-left:2.5px solid transparent;border-right:2.5px solid transparent;border-top:3px solid #f4f4f4"></div>
<svg class="a" style="z-index:10;left:692.5px;top:204.6px" width="5.4" height="5.4" viewBox="0 0 10 10"><path d="M1 1L9 9M9 1L1 9" stroke="#f4f4f4" stroke-width="2.4"/></svg>
<div class="a" style="left:530.3px;top:213.4px;width:169.7px;height:107.9px;background:#2b2b33;"></div>
<div class="a" style="left:532px;top:307.4px;width:82.8px;height:12.2px;background:#3a3a40;border:1px solid #808086"></div>
<div class="a t " style="left:555.5px;top:313.5px;font-size:6.1px;letter-spacing:-0.291px;-webkit-text-stroke:0.1px;color:#eee">Show definition</div>
<div class="a t " style="left:3px;top:328.7px;font-size:6.1px;letter-spacing:-0.334px;">Results</div>
<div class="a" style="z-index:10;left:304.0px;top:327.6px;width:0;height:0;border-left:2.5px solid transparent;border-right:2.5px solid transparent;border-top:3px solid #f4f4f4"></div>
<svg class="a" style="z-index:10;left:312.7px;top:326.0px" width="5.4" height="5.4" viewBox="0 0 10 10"><path d="M1 1L9 9M9 1L1 9" stroke="#f4f4f4" stroke-width="2.4"/></svg>
<div class="a" style="left:5px;top:334.4px;width:36.5px;height:10.4px;background:#28303e;border:1px solid #304c68"></div>
<div class="a t " style="left:18px;top:339.8px;font-size:6.12px;letter-spacing:-0.107px;">1 Errors</div>
<div class="a" style="left:44px;top:334.4px;width:45.5px;height:10.4px;background:#28303e;border:1px solid #304c68"></div>
<div class="a t " style="left:57.5px;top:339.8px;font-size:6.12px;letter-spacing:-0.120px;">1 Warnings</div>
<div class="a" style="left:93px;top:334.4px;width:46.5px;height:10.4px;background:#28303e;border:1px solid #304c68"></div>
<div class="a t " style="left:106.5px;top:339.8px;font-size:6.12px;letter-spacing:-0.129px;">1 Messages</div>
<div class="a" style="left:143.5px;top:334.4px;width:40.5px;height:10.4px;background:#28303e;border:1px solid #304c68"></div>
<div class="a t " style="left:156.5px;top:339.8px;font-size:6.12px;letter-spacing:-0.119px;">0 Patches</div>
<div class="a" style="left:42.6px;top:336px;width:0.8px;height:7.4px;background:#6a6a70;"></div>
<div class="a" style="left:91px;top:336px;width:0.8px;height:7.4px;background:#6a6a70;"></div>
<div class="a" style="left:141.6px;top:336px;width:0.8px;height:7.4px;background:#6a6a70;"></div>
<svg class="a" style="left:7.5px;top:336.2px" width="6.8" height="6.8" viewBox="0 0 10 10"><rect width="10" height="10" rx="2" fill="#d8323c"/><path d="M2.6 2.6L7.4 7.4M7.4 2.6L2.6 7.4" stroke="#fff" stroke-width="1.9"/></svg>
<svg class="a" style="left:47px;top:336px" width="7.2" height="7.2" viewBox="0 0 10 10"><path d="M5 0.6L9.7 9.4H0.3Z" fill="#f2c620" stroke="#fff4b0" stroke-width="0.6"/><rect x="4.3" y="3.4" width="1.4" height="3.2" fill="#222"/><rect x="4.3" y="7.2" width="1.4" height="1.3" fill="#222"/></svg>
<svg class="a" style="left:96.5px;top:336px" width="7.2" height="7.2" viewBox="0 0 10 10"><circle cx="5" cy="5" r="4.8" fill="#2f86dc"/><circle cx="5" cy="5" r="3.9" fill="#8cc4f4"/><rect x="4.2" y="4.2" width="1.6" height="3.6" fill="#fff"/><rect x="4.2" y="2" width="1.6" height="1.5" fill="#fff"/></svg>
<svg class="a" style="left:147px;top:336px" width="7" height="7" viewBox="0 0 10 10"><path d="M2 1L6 5L3.5 7.5Z" fill="#ddd"/><path d="M5 4L8.5 8.5" stroke="#bbb" stroke-width="1.6"/></svg>
<div class="a" style="left:2px;top:345.8px;width:318.5px;height:0.9px;background:#b4b8c0;"></div>
<div class="a" style="left:2px;top:346.8px;width:318.5px;height:11.4px;background:#3a3a40;"></div>
<div class="a" style="left:2px;top:358.2px;width:318.5px;height:106.2px;background:#2a2a32;"></div>
<div class="a t " style="left:18px;top:352.7px;font-size:6.1px;letter-spacing:-0.379px;">Severity</div>
<div class="a t " style="left:201px;top:352.7px;font-size:6.1px;letter-spacing:-0.383px;">Line</div>
<div class="a t " style="left:241px;top:352.7px;font-size:6.1px;letter-spacing:-0.305px;">Char</div>
<svg class="a" style="left:3.8px;top:359.79999999999995px" width="7" height="7" viewBox="0 0 10 10"><rect width="10" height="10" rx="2" fill="#d8323c"/><path d="M2.6 2.6L7.4 7.4M7.4 2.6L2.6 7.4" stroke="#fff" stroke-width="1.9"/></svg>
<div class="a t  b" style="left:18px;top:363.4px;font-size:6.12px;letter-spacing:-0.059px;-webkit-text-stroke:0.12px">Error</div>
<div class="a t " style="left:18px;top:372.09999999999997px;font-size:6.12px;letter-spacing:0.081px;color:#2a78b4">Can&#x27;t load schema from http://json-buddy.com/library/book</div>
<div class="a t " style="left:18px;top:379.59999999999997px;font-size:6.12px;letter-spacing:-0.051px;">Position:</div>
<div class="a t " style="left:42.611875000000005px;top:379.59999999999997px;font-size:6.12px;letter-spacing:0.078px;color:#2a78b4">/properties/bib/properties/book/$ref</div>
<div class="a t " style="left:18px;top:387.59999999999997px;font-size:6.12px;letter-spacing:-0.040px;">In file:</div>
<div class="a t " style="left:35.606875px;top:387.59999999999997px;font-size:6.1px;letter-spacing:-0.042px;color:#2a78b4">D:\Users\Clemens\Documents\JSONBuddy\SchemaPools\Library\library_schema_root.json</div>
<svg class="a" style="left:3.8px;top:394.09999999999997px" width="7.4" height="7.4" viewBox="0 0 10 10"><path d="M5 0.6L9.7 9.4H0.3Z" fill="#f2c620" stroke="#fff4b0" stroke-width="0.6"/><rect x="4.3" y="3.4" width="1.4" height="3.2" fill="#222"/><rect x="4.3" y="7.2" width="1.4" height="1.3" fill="#222"/></svg>
<div class="a t  b" style="left:18px;top:397.7px;font-size:6.12px;letter-spacing:-0.068px;-webkit-text-stroke:0.12px">Warning</div>
<div class="a t " style="left:18px;top:406.4px;font-size:6.12px;letter-spacing:0.080px;color:#2a78b4">No type specified for schema level and no &quot;enum&quot; or &quot;default&quot; keyword is found.</div>
<div class="a t " style="left:18px;top:413.9px;font-size:6.12px;letter-spacing:-0.051px;">Position:</div>
<div class="a t " style="left:42.611875000000005px;top:413.9px;font-size:6.12px;letter-spacing:0.078px;color:#2a78b4">/properties/bib/properties/book</div>
<div class="a t " style="left:18px;top:421.9px;font-size:6.12px;letter-spacing:-0.040px;">In file:</div>
<div class="a t " style="left:35.606875px;top:421.9px;font-size:6.1px;letter-spacing:-0.042px;color:#2a78b4">D:\Users\Clemens\Documents\JSONBuddy\SchemaPools\Library\library_schema_root.json</div>
<svg class="a" style="left:3.8px;top:428.59999999999997px" width="7.2" height="7.2" viewBox="0 0 10 10"><circle cx="5" cy="5" r="4.8" fill="#2f86dc"/><circle cx="5" cy="5" r="3.9" fill="#8cc4f4"/><rect x="4.2" y="4.2" width="1.6" height="3.6" fill="#fff"/><rect x="4.2" y="2" width="1.6" height="1.5" fill="#fff"/></svg>
<div class="a t  b" style="left:18px;top:432.2px;font-size:6.12px;letter-spacing:-0.072px;-webkit-text-stroke:0.12px">Message</div>
<div class="a t " style="left:18px;top:440.9px;font-size:6.12px;letter-spacing:0.080px;color:#2a78b4">Definition never used in local schema.</div>
<div class="a t " style="left:18px;top:448.4px;font-size:6.12px;letter-spacing:-0.051px;">Position:</div>
<div class="a t " style="left:42.611875000000005px;top:448.4px;font-size:6.12px;letter-spacing:0.075px;color:#2a78b4">/definitions/author</div>
<div class="a t " style="left:18px;top:456.4px;font-size:6.12px;letter-spacing:-0.040px;">In file:</div>
<div class="a t " style="left:35.606875px;top:456.4px;font-size:6.1px;letter-spacing:-0.042px;color:#2a78b4">D:\Users\Clemens\Documents\JSONBuddy\SchemaPools\Library\library_schema_root.json</div>
<div class="a" style="left:320.5px;top:333px;width:3px;height:132px;background:#36363b;"></div>
<div class="a t " style="left:324px;top:328.8px;font-size:6.1px;letter-spacing:-0.239px;">JSON Pointer Evaluator</div>
<div class="a" style="z-index:10;left:503.5px;top:327.7px;width:0;height:0;border-left:2.5px solid transparent;border-right:2.5px solid transparent;border-top:3px solid #f4f4f4"></div>
<svg class="a" style="z-index:10;left:512.2px;top:326.09999999999997px" width="5.4" height="5.4" viewBox="0 0 10 10"><path d="M1 1L9 9M9 1L1 9" stroke="#f4f4f4" stroke-width="2.4"/></svg>
<div class="a" style="left:323.5px;top:333px;width:134px;height:22.6px;background:#2b2b33;"></div>
<div class="a t " style="left:326.5px;top:338.5px;font-size:6.12px;letter-spacing:-0.133px;color:#50505a">1</div>
<div class="a" style="left:459.4px;top:333.8px;width:35.2px;height:10.9px;background:#3a3a40;border:0.9px solid #a0a0a6"></div>
<div class="a t " style="left:462.5px;top:339.4px;font-size:6.1px;letter-spacing:-0.530px;">Evaluate</div>
<div class="a" style="left:485px;top:338.2px;width:0;height:0;border-left:2.7px solid transparent;border-right:2.7px solid transparent;border-top:3px solid #f4f4f4"></div>
<div class="a" style="left:460.1px;top:347.6px;width:6.4px;height:6.5px;background:#fff;border:0.5px solid #888"></div>
<div class="a t " style="left:469.5px;top:351.4px;font-size:6.1px;letter-spacing:-0.344px;">Evaluate on typing</div>
<div class="a" style="left:323.5px;top:357px;width:195.5px;height:12px;background:#3a3a40;"></div>
<div class="a" style="left:323.5px;top:369px;width:195.5px;height:96px;background:#2a2a32;"></div>
<div class="a" style="left:328.5px;top:361.8px;width:3px;height:0.9px;background:#d0783a;"></div>
<div class="a" style="left:328.5px;top:363.8px;width:3px;height:0.9px;background:#d0783a;"></div>
<div class="a t " style="left:339.6px;top:363px;font-size:6.1px;letter-spacing:-0.456px;">Type</div>
<div class="a t " style="left:390px;top:363px;font-size:6.1px;letter-spacing:-0.330px;">Value</div>
<div class="a t " style="left:408px;top:374.2px;font-size:6.1px;letter-spacing:-0.346px;">No results</div>
<div class="a t " style="left:523.5px;top:328.7px;font-size:6.1px;letter-spacing:-0.205px;">Quick Associations</div>
<div class="a" style="z-index:10;left:684.5px;top:327.7px;width:0;height:0;border-left:2.5px solid transparent;border-right:2.5px solid transparent;border-top:3px solid #f4f4f4"></div>
<svg class="a" style="z-index:10;left:693.2px;top:326.09999999999997px" width="5.4" height="5.4" viewBox="0 0 10 10"><path d="M1 1L9 9M9 1L1 9" stroke="#f4f4f4" stroke-width="2.4"/></svg>
<div class="a t  b" style="left:522.6px;top:337.9px;font-size:6.5px;letter-spacing:-0.356px;-webkit-text-stroke:0.15px">Stylesheet (XSL):</div>
<div class="a" style="left:523px;top:343.7px;width:151.8px;height:9.6px;background:#2b2b33;border:1px solid #505058"></div>
<div class="a" style="left:674.8px;top:343.5px;width:9.6px;height:9.8px;background:#38383e;border:0.9px solid #a4a4a8"></div>
<div class="a t " style="left:677.2px;top:349.6px;font-size:6.12px;letter-spacing:-0.067px;color:#9a9aa0;-webkit-text-stroke:0">...</div>
<div class="a t  b" style="left:522.6px;top:360.4px;font-size:6.5px;letter-spacing:-0.491px;-webkit-text-stroke:0.15px">Assign JSON root schema:</div>
<div class="a" style="left:523px;top:366.4px;width:151.8px;height:9.8px;background:#2b2b33;border:1px solid #505058"></div>
<div class="a t " style="left:525.5px;top:370.6px;font-size:6.8px;letter-spacing:-0.119px;color:#52525c">Set path to root schema here or select a schema p</div>
<div class="a" style="left:674.8px;top:366px;width:9.6px;height:9.8px;background:#38383e;border:0.9px solid #a4a4a8"></div>
<div class="a t " style="left:677.2px;top:372px;font-size:6.12px;letter-spacing:-0.067px;color:#9a9aa0;-webkit-text-stroke:0">...</div>
<svg class="a" style="left:688px;top:345px" width="9" height="7" viewBox="0 0 9 7"><path d="M0.2 1.8H2.6L3.2 2.4H5V3L6.4 4.2L5 6.6H0.2Z" fill="#f4f4f4"/><path d="M5.6 0.8Q7.6 0.4 8.2 2.2" fill="none" stroke="#e8e8e8" stroke-width="0.8"/><path d="M7.4 2L8.6 2.6L8.8 1.2Z" fill="#e8e8e8"/></svg>
<svg class="a" style="left:688px;top:368px" width="9" height="7" viewBox="0 0 9 7"><path d="M0.2 1.8H2.6L3.2 2.4H5V3L6.4 4.2L5 6.6H0.2Z" fill="#f4f4f4"/><path d="M5.6 0.8Q7.6 0.4 8.2 2.2" fill="none" stroke="#e8e8e8" stroke-width="0.8"/><path d="M7.4 2L8.6 2.6L8.8 1.2Z" fill="#e8e8e8"/></svg>
<div class="a t  b" style="left:522.6px;top:382.9px;font-size:6.5px;letter-spacing:-0.454px;-webkit-text-stroke:0.15px">Selected schema pool:</div>
<div class="a" style="left:522.6px;top:389px;width:163px;height:12.3px;background:#e6e6e6;border:1px solid #b8b8b8"></div>
<div class="a t " style="left:525px;top:395.4px;font-size:7px;letter-spacing:-0.321px;color:#6e6e6e">No pool selected</div>
<svg class="a" style="left:678.5px;top:393.5px" width="5" height="4" viewBox="0 0 5 4"><path d="M0.5 0.8L2.5 3L4.5 0.8" stroke="#555" fill="none" stroke-width="0.9"/></svg>
<svg class="a" style="left:688.6px;top:385.5px" width="11.4" height="12.5" viewBox="0 0 11.4 12.5"><circle cx="4.2" cy="8.6" r="2.6" fill="#8a2038" opacity="0.85"/><circle cx="4.6" cy="2.8" r="2.2" fill="#1f5a44" opacity="0.8"/><circle cx="10.4" cy="8.6" r="2.2" fill="#1f5a44" opacity="0.8"/><circle cx="10" cy="3" r="1.6" fill="#7a2038" opacity="0.6"/></svg>
<div class="a" style="left:522.6px;top:403.6px;width:50.8px;height:11.4px;background:#3a3a40;border:1px solid #9c9ca0"></div>
<div class="a" style="left:574.4px;top:403.6px;width:49.2px;height:11.4px;background:#3a3a40;border:1px solid #9c9ca0"></div>
<div class="a t " style="left:529.5px;top:409.5px;font-size:6.1px;letter-spacing:-0.411px;">Open config ...</div>
<div class="a t " style="left:590px;top:409.5px;font-size:6.1px;letter-spacing:-0.305px;">Reload</div>
<div class="a" style="left:522.6px;top:421px;width:6.4px;height:6.4px;background:#fff;border:0.5px solid #888"></div>
<svg class="a" style="left:523.4px;top:421.8px" width="5" height="5" viewBox="0 0 10 10"><path d="M1.5 5L4 7.8L8.8 1.8" stroke="#111" fill="none" stroke-width="2"/></svg>
<div class="a t " style="left:531px;top:424.3px;font-size:6.1px;letter-spacing:-0.395px;">Current document is a JSON Schema</div>
<div class="a" style="left:521.4px;top:455.4px;width:51px;height:9.8px;background:#424247;"></div>
<div class="a t  b" style="left:525px;top:460.4px;font-size:6.1px;letter-spacing:-0.294px;color:#5a5a62">Find and Replace</div>
<div class="a" style="left:574.6px;top:455.4px;width:53px;height:9.8px;background:#222b36;"></div>
<div class="a t  b" style="left:576.7px;top:460.4px;font-size:6.1px;letter-spacing:-0.416px;color:#2f86c4">Quick Associations</div>
<div class="a" style="left:0px;top:465px;width:700px;height:11px;background:linear-gradient(#d9600f,#d25a0d 50%,#cc560b);"></div>
<div class="a" style="left:654.2px;top:467px;width:0.8px;height:8px;background:#f0b080;"></div>
<div class="a" style="left:690.2px;top:467px;width:0.8px;height:8px;background:#f0b080;"></div>
<div class="a t " style="left:656.7px;top:471.7px;font-size:6.1px;letter-spacing:-0.393px;color:#fff">Ln 3</div>
<div class="a t " style="left:672px;top:471.7px;font-size:6.1px;letter-spacing:-0.288px;color:#fff">Col 3</div>
<div class="a" style="left:696px;top:472px;width:1px;height:1px;background:#f0c0a0;"></div>
<div class="a" style="left:694px;top:474px;width:1px;height:1px;background:#f0c0a0;"></div>
<div class="a" style="left:696px;top:474px;width:1px;height:1px;background:#f0c0a0;"></div>
<div class="a b" id="wm" style="z-index:9;left:13.5px;top:38.1px;font-size:16.5px;color:#828282;-webkit-text-stroke:1.1px #828282;transform-origin:0 0;transform:scaleX(1.29);text-shadow:0.9px 1.3px 0.6px #1c1c1c;letter-spacing:0.2px">SOFTGOZAR.COM</div>
<div class="a" id="wm2" dir="rtl" style="z-index:1;left:32px;top:51.3px;font-family:'DejaVu Sans',sans-serif;font-size:20px;line-height:24px;color:#606066;transform-origin:0 0;transform:scaleX(0.69)">اولین دانشنامه نرم افزار ایران</div>
<!--BODY-->
</div></body></html>
